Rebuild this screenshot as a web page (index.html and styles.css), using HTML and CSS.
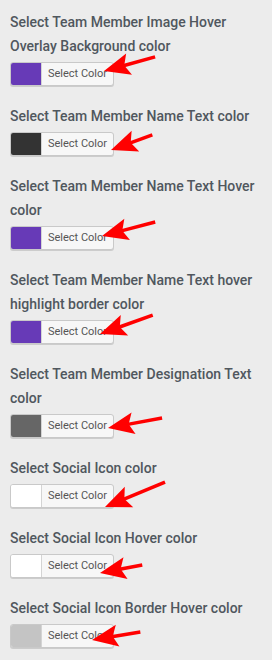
FILE: index.html
```html
<!DOCTYPE html>
<html lang="en">
  <head>
    <meta charset="UTF-8" />
    <title>Team Member Colors</title>
    <link rel="stylesheet" href="styles.css">
  </head>
  <body>
    <div class="settings">
      <div class="field">
        <label>Select Team Member Image Hover Overlay Background color</label>
        <button class="color-btn"><span class="swatch" style="background:#673ab7"></span><span class="btn-text">Select Color</span></button>
      </div>
      <div class="field">
        <label>Select Team Member Name Text color</label>
        <button class="color-btn"><span class="swatch" style="background:#333333"></span><span class="btn-text">Select Color</span></button>
      </div>
      <div class="field">
        <label>Select Team Member Name Text Hover color</label>
        <button class="color-btn"><span class="swatch" style="background:#673ab7"></span><span class="btn-text">Select Color</span></button>
      </div>
      <div class="field">
        <label>Select Team Member Name Text hover highlight border color</label>
        <button class="color-btn"><span class="swatch" style="background:#673ab7"></span><span class="btn-text">Select Color</span></button>
      </div>
      <div class="field">
        <label>Select Team Member Designation Text color</label>
        <button class="color-btn"><span class="swatch" style="background:#666666"></span><span class="btn-text">Select Color</span></button>
      </div>
      <div class="field">
        <label>Select Social Icon color</label>
        <button class="color-btn"><span class="swatch" style="background:#ffffff"></span><span class="btn-text">Select Color</span></button>
      </div>
      <div class="field">
        <label>Select Social Icon Hover color</label>
        <button class="color-btn"><span class="swatch" style="background:#ffffff"></span><span class="btn-text">Select Color</span></button>
      </div>
      <div class="field">
        <label>Select Social Icon Border Hover color</label>
        <button class="color-btn"><span class="swatch" style="background:#c4c4c4"></span><span class="btn-text">Select Color</span></button>
      </div>
    </div>

    <!-- red annotation arrows -->
    <svg class="arrows" width="272" height="660" viewBox="0 0 272 660">
      <defs>
        <g id="arrow">
          <polygon points="0,0 26,-11 21,0 26,11" />
        </g>
      </defs>
      <g fill="#ff0000" stroke="#ff0000" stroke-width="3.5">
        <g transform="translate(104 71) rotate(-15.4)"><use href="#arrow" stroke="none" /><line x1="20" y1="0" x2="53" y2="0" /></g>
        <g transform="translate(111 150) rotate(-20.1)"><use href="#arrow" stroke="none" /><line x1="20" y1="0" x2="44" y2="0" /></g>
        <g transform="translate(102 236) rotate(-14.8)"><use href="#arrow" stroke="none" /><line x1="20" y1="0" x2="55" y2="0" /></g>
        <g transform="translate(100 334) rotate(-19.7)"><use href="#arrow" stroke="none" /><line x1="20" y1="0" x2="56" y2="0" /></g>
        <g transform="translate(108 428) rotate(-10.5)"><use href="#arrow" stroke="none" /><line x1="20" y1="0" x2="55" y2="0" /></g>
        <g transform="translate(105 507) rotate(-22.6)"><use href="#arrow" stroke="none" /><line x1="20" y1="0" x2="65" y2="0" /></g>
        <g transform="translate(100 573) rotate(-10.8)"><use href="#arrow" stroke="none" /><line x1="20" y1="0" x2="43" y2="0" /></g>
        <g transform="translate(92 640) rotate(-9.5)"><use href="#arrow" stroke="none" /><line x1="20" y1="0" x2="49" y2="0" /></g>
      </g>
    </svg>
  </body>
</html>
```

FILE: styles.css
```css
body {
  margin: 0;
  background-color: #ececec;
  font-family: Roboto, "Liberation Sans", sans-serif;
}
.settings {
  padding: 10px 4px 0 10px;
}
.field {
  margin-bottom: 18px;
}
.field label {
  display: block;
  font-size: 14px;
  font-weight: 500;
  line-height: 24px;
  color: #50575e;
  margin-bottom: 4px;
}
.color-btn {
  display: flex;
  align-items: stretch;
  width: 104px;
  height: 24px;
  padding: 0;
  border: 1px solid #c9c9c9;
  border-radius: 3px;
  box-shadow: 0 1px 0 #cccccc;
  background-color: #f7f7f7;
  overflow: hidden;
  cursor: pointer;
}
.swatch {
  width: 30px;
  border-right: 1px solid #d4d4d4;
}
.btn-text {
  flex: 1;
  font-family: Roboto, "Liberation Sans", sans-serif;
  font-size: 11px;
  line-height: 22px;
  color: #555555;
  text-align: center;
}
.arrows {
  position: absolute;
  top: 0;
  left: 0;
  pointer-events: none;
}
```
